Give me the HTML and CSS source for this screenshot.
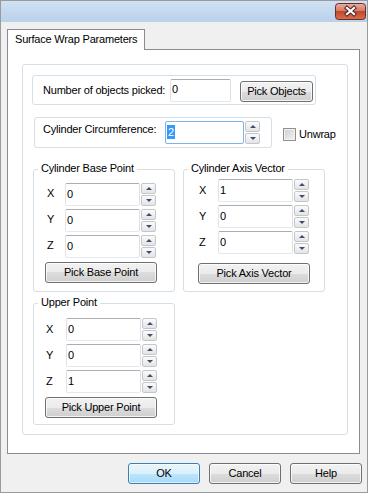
FILE: index.html
```html
<!DOCTYPE html>
<html>
<head>
<meta charset="utf-8">
<link rel="stylesheet" href="styles.css">
</head>
<body>
<div class="window">
  <div class="titlebar">
    <div class="close">
      <svg width="31" height="17" viewBox="0 0 31 17">
        <defs>
          <linearGradient id="cg" x1="0" y1="0" x2="0" y2="1">
            <stop offset="0" stop-color="#eab0a2"/>
            <stop offset="0.45" stop-color="#d77a63"/>
            <stop offset="0.5" stop-color="#c4462c"/>
            <stop offset="1" stop-color="#d7704f"/>
          </linearGradient>
        </defs>
        <rect x="0.5" y="0.5" width="30" height="16" rx="3" fill="url(#cg)" stroke="#6b2c24"/>
        <path d="M12 5 L19 11 M19 5 L12 11" stroke="#4b2b27" stroke-width="4.2" stroke-linecap="square"/>
        <path d="M12 5 L19 11 M19 5 L12 11" stroke="#ffffff" stroke-width="2.2" stroke-linecap="square"/>
      </svg>
    </div>
  </div>
  <div class="body">
    <div class="tabstrip">
      <div class="tab">Surface Wrap Parameters</div>
      <div class="tabfill"></div>
    </div>
    <div class="panel">
      <div class="outer">
        <div class="objbox">
          <span class="objlabel">Number of objects picked:</span>
          <div class="input objinput">0</div>
          <div class="btn objbtn">Pick Objects</div>
        </div>
        <div class="circrow">
          <div class="circbox">
            <span class="circlabel">Cylinder Circumference:</span>
            <div class="input focused circinput"><span class="sel">2</span></div>
            <div class="spin"><div class="sp up"></div><div class="sp down"></div></div>
          </div>
          <div class="check"></div>
          <span class="checklabel">Unwrap</span>
        </div>
        <div class="grouprow">
          <div class="group base">
            <span class="legend">Cylinder Base Point</span>
            <div class="row"><span class="lbl">X</span><div class="input field">0</div><div class="spin"><div class="sp up"></div><div class="sp down"></div></div></div>
            <div class="row"><span class="lbl">Y</span><div class="input field">0</div><div class="spin"><div class="sp up"></div><div class="sp down"></div></div></div>
            <div class="row"><span class="lbl">Z</span><div class="input field">0</div><div class="spin"><div class="sp up"></div><div class="sp down"></div></div></div>
            <div class="btn gbtn">Pick Base Point</div>
          </div>
          <div class="group axis">
            <span class="legend">Cylinder Axis Vector</span>
            <div class="row"><span class="lbl">X</span><div class="input field">1</div><div class="spin"><div class="sp up"></div><div class="sp down"></div></div></div>
            <div class="row"><span class="lbl">Y</span><div class="input field">0</div><div class="spin"><div class="sp up"></div><div class="sp down"></div></div></div>
            <div class="row"><span class="lbl">Z</span><div class="input field">0</div><div class="spin"><div class="sp up"></div><div class="sp down"></div></div></div>
            <div class="btn gbtn">Pick Axis Vector</div>
          </div>
        </div>
        <div class="group upper">
          <span class="legend">Upper Point</span>
          <div class="row"><span class="lbl">X</span><div class="input field">0</div><div class="spin"><div class="sp up"></div><div class="sp down"></div></div></div>
          <div class="row"><span class="lbl">Y</span><div class="input field">0</div><div class="spin"><div class="sp up"></div><div class="sp down"></div></div></div>
          <div class="row"><span class="lbl">Z</span><div class="input field">1</div><div class="spin"><div class="sp up"></div><div class="sp down"></div></div></div>
          <div class="btn gbtn">Pick Upper Point</div>
        </div>
      </div>
    </div>
  </div>
  <div class="footer">
    <div class="btn fbtn default">OK</div>
    <div class="btn fbtn">Cancel</div>
    <div class="btn fbtn">Help</div>
  </div>
</div>
</body>
</html>
```
FILE: styles.css
```css
html, body {
  margin: 0;
  padding: 0;
}
body {
  font-family: "Liberation Sans", Arial, sans-serif;
  font-size: 11px;
  line-height: 13px;
  letter-spacing: -0.2px;
  color: #000;
  background: #f0f0f0;
}
.window {
  width: 368px;
  height: 493px;
  box-sizing: border-box;
  border: 1px solid #9a9a9a;
  background: #f0f0f0;
  display: flex;
  flex-direction: column;
}
.window * {
  flex-shrink: 0;
  white-space: nowrap;
}
.titlebar {
  height: 21px;
  box-sizing: border-box;
  background: linear-gradient(#d0e1f3, #b9d1ea);
  display: flex;
  justify-content: flex-end;
  align-items: flex-start;
  padding: 2px 1px 0 0;
}
.close {
  width: 31px;
  height: 17px;
}
.close svg {
  display: block;
}
.body {
  padding: 7px 7px 0 6px;
}
.tabstrip {
  display: flex;
  height: 21px;
}
.tab {
  width: 138px;
  box-sizing: border-box;
  border: 1px solid #898c95;
  border-bottom: none;
  background: #fff;
  padding-left: 7px;
  line-height: 19px;
}
.tabstrip .tabfill {
  flex: 1 1 auto;
  border-bottom: 1px solid #898c95;
}
.panel {
  height: 404px;
  box-sizing: border-box;
  border: 1px solid #898c95;
  border-top: none;
  background: #fff;
  padding: 14px 11px 0 14px;
}
.outer {
  height: 371px;
  box-sizing: border-box;
  border: 1px solid #d5dfe5;
  border-radius: 3px;
}
.objbox {
  margin: 10px 0 0 9px;
  width: 284px;
  height: 30px;
  box-sizing: border-box;
  border: 1px solid #d5dfe5;
  border-radius: 3px;
  display: flex;
  align-items: flex-start;
  padding-left: 10px;
}
.objlabel {
  width: 127px;
  margin-top: 8px;
}
.input {
  box-sizing: border-box;
  border: 1px solid;
  border-color: #abadb3 #dbdfe6 #e3e9ef #e2e3ea;
  border-radius: 2px;
  background: #fff;
  padding: 4px 0 0 1px;
}
.objinput {
  width: 61px;
  height: 23px;
  margin-top: 3px;
  padding-top: 3px;
}
.btn {
  box-sizing: border-box;
  border: 1px solid #707070;
  border-radius: 3px;
  background: linear-gradient(#f2f2f2 0%, #ebebeb 50%, #dddddd 50%, #cfcfcf 100%);
  box-shadow: inset 0 0 0 1px rgba(255, 255, 255, 0.75);
  display: flex;
  align-items: center;
  justify-content: center;
}
.objbtn {
  width: 73px;
  height: 21px;
  margin: 5px 0 0 9px;
}
.circrow {
  display: flex;
  align-items: flex-start;
  margin-top: 12px;
}
.circbox {
  margin-left: 11px;
  width: 238px;
  height: 31px;
  box-sizing: border-box;
  border: 1px solid #d5dfe5;
  border-radius: 3px;
  display: flex;
  align-items: flex-start;
  padding: 3px 0 0 8px;
}
.circlabel {
  width: 122px;
  margin-top: 2px;
}
.circinput {
  width: 79px;
  height: 23px;
  padding-top: 3px;
}
.focused {
  border-color: #7eb4ea;
}
.sel {
  display: inline-block;
  background: #3399ff;
  color: #fff;
  line-height: 14px;
  padding: 0 1px;
}
.spin {
  margin-left: 1px;
  width: 15px;
  height: 23px;
  display: flex;
  flex-direction: column;
  justify-content: space-between;
}
.sp {
  height: 11px;
  box-sizing: border-box;
  border: 1px solid #c3c7cc;
  border-radius: 2px;
  background: linear-gradient(#fbfbfb, #e4e4e4);
  display: flex;
  align-items: center;
  justify-content: center;
}
.sp::after {
  content: "";
  width: 0;
  height: 0;
  border-left: 3px solid transparent;
  border-right: 3px solid transparent;
}
.up::after {
  border-bottom: 3px solid #3e4d70;
}
.down::after {
  border-top: 3px solid #3e4d70;
}
.check {
  margin: 11px 0 0 11px;
  width: 13px;
  height: 13px;
  box-sizing: border-box;
  border: 1px solid #8f8f8f;
  background: linear-gradient(135deg, #cbced2, #f3f3f3);
  box-shadow: inset 0 0 0 1px #f2f2f2;
}
.checklabel {
  margin: 11px 0 0 3px;
}
.grouprow {
  display: flex;
  align-items: flex-start;
  margin-top: 21px;
}
.group {
  position: relative;
  width: 142px;
  box-sizing: border-box;
  border: 1px solid #d5dfe5;
  border-radius: 3px;
  display: flex;
  flex-direction: column;
  align-items: flex-start;
}
.legend {
  position: absolute;
  top: -8px;
  left: 4px;
  padding: 0 3px;
  background: #fff;
}
.base {
  margin-left: 10px;
  height: 123px;
  padding-top: 13px;
}
.axis {
  margin-left: 8px;
  height: 123px;
  padding-top: 9px;
}
.upper {
  margin: 11px 0 0 10px;
  height: 122px;
  padding-top: 14px;
}
.row {
  display: flex;
  align-items: center;
  height: 23px;
  margin-bottom: 3px;
}
.base .row {
  padding-left: 13px;
}
.axis .row {
  padding-left: 15px;
}
.upper .row {
  padding-left: 12px;
}
.lbl {
  width: 18px;
  margin-top: -2px;
}
.axis .lbl {
  width: 19px;
  margin-top: 0;
}
.upper .lbl {
  width: 20px;
  margin-top: -1px;
}
.field {
  width: 75px;
  height: 23px;
}
.gbtn {
  width: 112px;
  height: 21px;
  margin: 1px 0 0 11px;
}
.axis .gbtn {
  margin: 6px 0 0 14px;
}
.footer {
  display: flex;
  justify-content: flex-end;
  gap: 9px;
  margin-top: 9px;
  padding-right: 5px;
}
.fbtn {
  width: 72px;
  height: 21px;
}
.default {
  border-color: #3c7fb1;
  background: linear-gradient(#eaf6fd 0%, #d9f0fc 50%, #bee6fd 50%, #a7d9f5 100%);
  box-shadow: inset 0 0 0 1px rgba(255, 255, 255, 0.6);
}
```
